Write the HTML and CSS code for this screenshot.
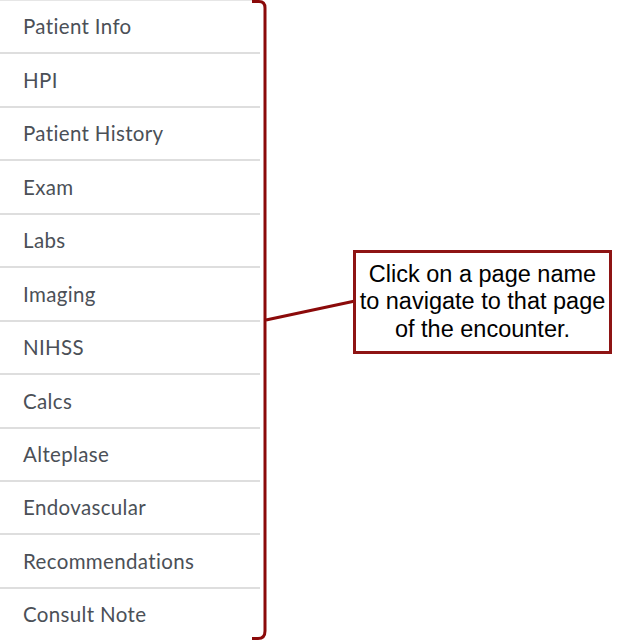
FILE: index.html
```html
<!DOCTYPE html>
<html>
<head>
<meta charset="utf-8">
<link rel="stylesheet" href="styles.css">
</head>
<body>
<div class="page">
  <ul class="nav">
    <li class="nav-item">Patient Info</li>
    <li class="nav-item">HPI</li>
    <li class="nav-item">Patient History</li>
    <li class="nav-item">Exam</li>
    <li class="nav-item">Labs</li>
    <li class="nav-item">Imaging</li>
    <li class="nav-item">NIHSS</li>
    <li class="nav-item">Calcs</li>
    <li class="nav-item">Alteplase</li>
    <li class="nav-item">Endovascular</li>
    <li class="nav-item">Recommendations</li>
    <li class="nav-item">Consult Note</li>
  </ul>
  <svg class="bracket" width="620" height="640" viewBox="0 0 620 640">
    <path d="M252 1.5 H259 Q265 1.5 265 8 V631 Q265 638.5 258 638.5 H252" fill="none" stroke="#8b0a0a" stroke-width="3"/>
    <line x1="266" y1="320" x2="355" y2="301" stroke="#8b0a0a" stroke-width="3"/>
  </svg>
  <div class="callout">Click on a page name<br>to navigate to that page<br>of the encounter.</div>
</div>
</body>
</html>
```
FILE: styles.css
```css
html, body {
  margin: 0;
  padding: 0;
  background: #ffffff;
}
.page {
  position: relative;
  width: 620px;
  height: 640px;
  overflow: hidden;
}
.nav {
  list-style: none;
  margin: 0;
  padding: 0;
  width: 260px;
  border-top: 1px solid #e6e6e6;
  display: flex;
  flex-direction: column;
}
.nav-item {
  flex: none;
  height: 51.45px;
  box-sizing: content-box;
  display: flex;
  align-items: center;
  padding-left: 23px;
  border-bottom: 2px solid #dedede;
  font-family: Lato, "Open Sans", sans-serif;
  font-size: 20.5px;
  letter-spacing: 0.35px;
  color: #4b5057;
  line-height: 1;
  padding-bottom: 0;
}
.nav-item::after {
  content: "";
  display: block;
  height: 2px;
}
.bracket {
  position: absolute;
  left: 0;
  top: 0;
}
.callout {
  position: absolute;
  left: 353px;
  top: 250px;
  width: 253px;
  height: 98px;
  border: 3px solid #8e1414;
  font-family: "Liberation Sans", Arial, sans-serif;
  font-size: 23.5px;
  line-height: 27.5px;
  white-space: nowrap;
  color: #000;
  text-align: center;
  display: flex;
  align-items: center;
  justify-content: center;
  background: #fff;
}
```
